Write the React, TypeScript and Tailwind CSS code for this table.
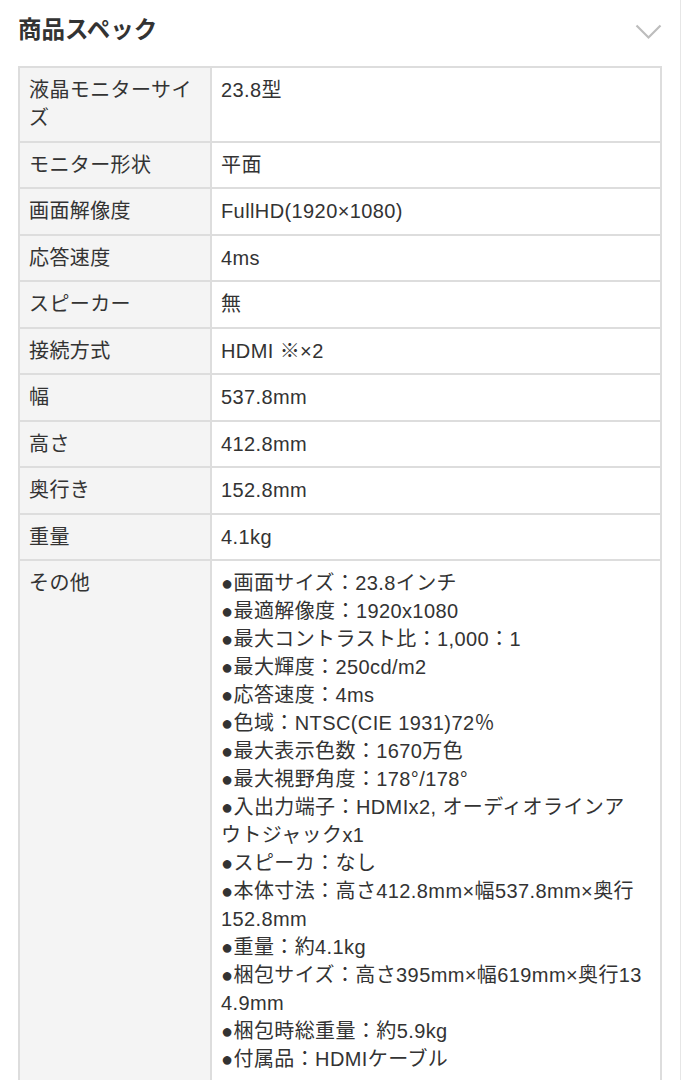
import React from "react";

const specs: { label: string; value: React.ReactNode }[] = [
  { label: "液晶モニターサイズ", value: "23.8型" },
  { label: "モニター形状", value: "平面" },
  { label: "画面解像度", value: "FullHD(1920×1080)" },
  { label: "応答速度", value: "4ms" },
  { label: "スピーカー", value: "無" },
  { label: "接続方式", value: "HDMI ※×2" },
  { label: "幅", value: "537.8mm" },
  { label: "高さ", value: "412.8mm" },
  { label: "奥行き", value: "152.8mm" },
  { label: "重量", value: "4.1kg" },
];

// wrapped the same way the original page wraps them
const others = [
  "●画面サイズ：23.8インチ",
  "●最適解像度：1920x1080",
  "●最大コントラスト比：1,000：1",
  "●最大輝度：250cd/m2",
  "●応答速度：4ms",
  "●色域：NTSC(CIE 1931)72％",
  "●最大表示色数：1670万色",
  "●最大視野角度：178°/178°",
  "●入出力端子：HDMIx2, オーディオラインア\nウトジャックx1",
  "●スピーカ：なし",
  "●本体寸法：高さ412.8mm×幅537.8mm×奥行\n152.8mm",
  "●重量：約4.1kg",
  "●梱包サイズ：高さ395mm×幅619mm×奥行13\n4.9mm",
  "●梱包時総重量：約5.9kg",
  "●付属品：HDMIケーブル",
];

const SpecRow = ({ label, children }: { label: string; children: React.ReactNode }) => (
  <div className="flex border-b-2 border-[#dddddd]">
    <div className="w-[192px] shrink-0 border-r-2 border-[#dddddd] bg-[#f4f4f4] px-[9px] py-[8.25px]">
      {label}
    </div>
    <div className="min-w-0 flex-1 px-[9px] py-[8.25px] break-all">{children}</div>
  </div>
);

export default function App() {
  return (
    <div
      className="min-h-screen border-r border-[#e6e6e6] bg-white text-[#333333]"
      style={{ fontFamily: '"Liberation Sans", "Noto Sans CJK JP", sans-serif' }}
    >
      {/* Section header */}
      <div className="flex h-[66px] items-center justify-between pl-[18px] pr-[18px]">
        <h2 className="-mt-[4px] text-[23.5px] font-bold">商品スペック</h2>
        <svg width="27" height="16" viewBox="0 0 27 16" className="mt-[-2px]" fill="none">
          <path d="M1.5 1.5 L13.5 13.5 L25.5 1.5" stroke="#bdbdbd" strokeWidth="2.2" />
        </svg>
      </div>

      {/* Spec table */}
      <div className="mx-[18px] border-x-2 border-t-2 border-[#dddddd] text-[20px] leading-[28px] tracking-[0.4px]">
        {specs.map((s) => (
          <SpecRow key={s.label} label={s.label}>
            {s.value}
          </SpecRow>
        ))}
        <SpecRow label="その他">
          {others.map((line) => (
            <div key={line} className="whitespace-pre-line">
              {line}
            </div>
          ))}
        </SpecRow>
      </div>
    </div>
  );
}
